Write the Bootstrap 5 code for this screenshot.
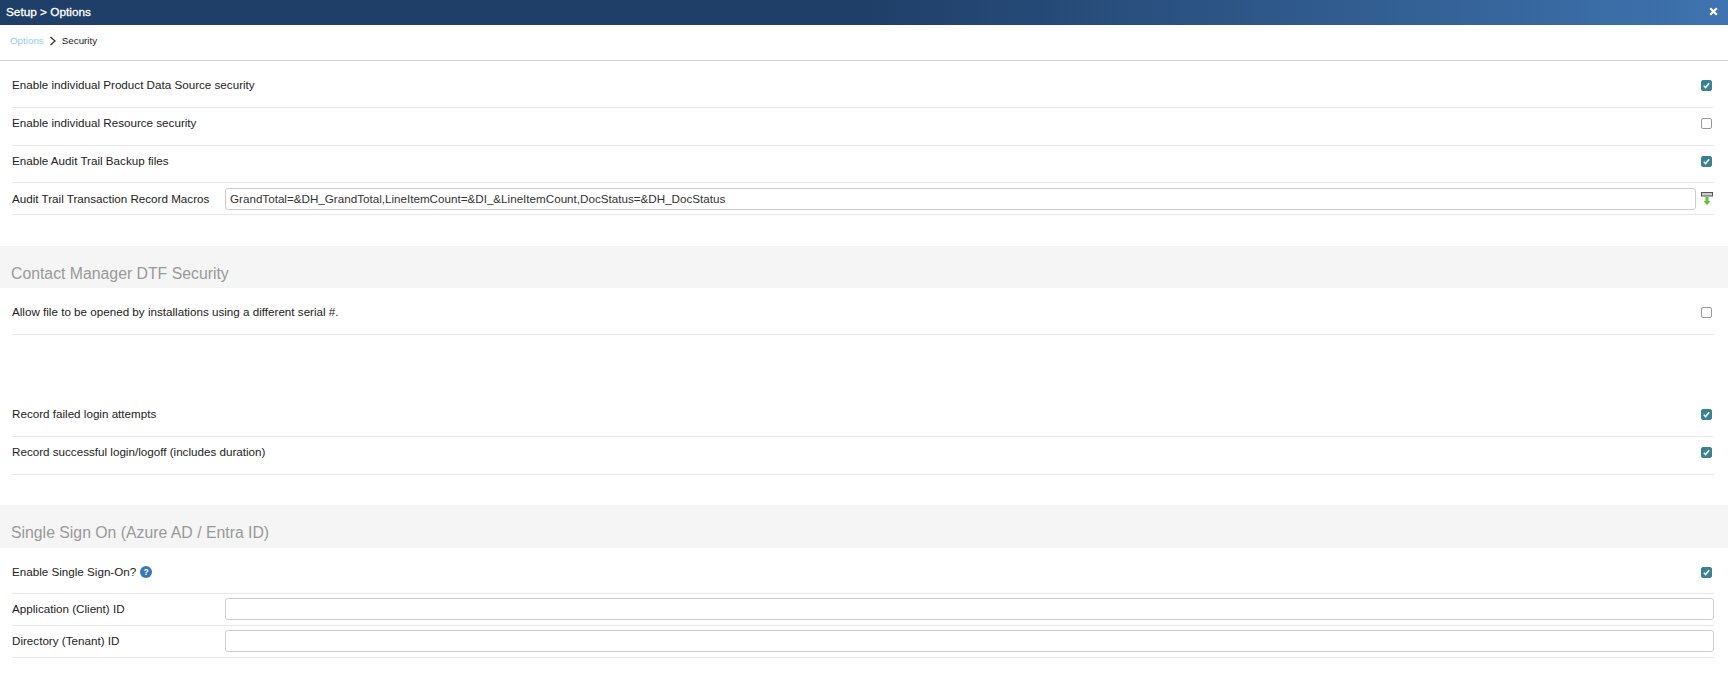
<!DOCTYPE html>
<html lang="en">
<head>
<meta charset="utf-8">
<title>Setup &gt; Options</title>
<link href="https://cdn.jsdelivr.net/npm/bootstrap@5.3.0/dist/css/bootstrap.min.css" rel="stylesheet">
<style>
html,body{height:686px;overflow:hidden;background:#fff}
body{font-family:"Liberation Sans",Arial,sans-serif;font-size:11.65px;color:#222;line-height:14px}
.title-bar{height:25px;padding:0 6px 2px;color:#fff;font-size:11.8px;font-weight:400;-webkit-text-stroke:.3px #fff;background:linear-gradient(90deg,#1f3f68 0,#1f3f68 50%,#3f74b0 100%)}
.crumb-bar{height:36px;padding:0 10px 3px;border-bottom:1px solid #d2d2d2;font-size:9.8px;gap:5px}
.crumb-link{color:#93cdee}
.opt-row{margin:0 14px 0 12px;border-bottom:1px solid #e8e8e8;padding-right:2px}
.row-lg{padding-top:17px}
.row-sm{padding-top:8px}
.row-field{padding-bottom:1px}
.h-47{height:47px}.h-46{height:46px}.h-38{height:38px}.h-37{height:37px}.h-32{height:32px}
.opt-check{appearance:none;width:11px;height:11px;margin:2px 0 0;border:1px solid #999;border-radius:2px;background:#fff;display:block;flex:none}
.opt-check:checked{border-color:#3b8291;background-color:#3b8291;background-image:url("data:image/svg+xml,%3Csvg xmlns='http://www.w3.org/2000/svg' viewBox='0 0 11 11'%3E%3Cpath d='M2.2 5.8 4.4 8 8.8 2.8' fill='none' stroke='white' stroke-width='1.8'/%3E%3C/svg%3E")}
.opt-label{width:213px;flex:none}
.opt-input{height:22px;border:1px solid #ccc;border-radius:3px;padding:0 4px;font:11.65px "Liberation Sans",Arial,sans-serif;color:#333;min-width:0;flex:1 1 auto;outline:none}
.section-head{height:42px;background:#f5f5f5;padding:0 11px 5px;color:#999;font-size:15.8px;line-height:19px;font-weight:400}
.sec-a{margin-top:31px}
.sec-b{margin-top:30px;height:43px;padding-bottom:6px}
.gap-a{height:64px}
.icon-btn{flex:none;margin:0 -1px 0 5px}
.help-dot{width:12px;height:12px;margin-left:4px}
.opt-input-full{margin-right:-2px}
</style>
</head>
<body>
<div class="title-bar d-flex align-items-center justify-content-between">
  <span>Setup &gt; Options</span>
  <svg width="9" height="9" viewBox="0 0 9 9" class="me-1"><path d="M1.2 1.2 7.8 7.800M7.8 1.2 1.2 7.8" stroke="#fff" stroke-width="2.2" fill="none"/></svg>
</div>
<div class="crumb-bar d-flex align-items-center">
  <span class="crumb-link">Options</span>
  <svg width="8" height="10" viewBox="0 0 8 10"><path d="M1.5 1 6 5 1.5 9" stroke="#333" stroke-width="1.3" fill="none"/></svg>
  <span>Security</span>
</div>
<div class="opt-row row-lg h-47 d-flex align-items-start justify-content-between"><span>Enable individual Product Data Source security</span><input class="opt-check" type="checkbox" checked aria-label="Enable individual Product Data Source security"></div>
<div class="opt-row row-sm h-38 d-flex align-items-start justify-content-between"><span>Enable individual Resource security</span><input class="opt-check" type="checkbox" aria-label="Enable individual Resource security"></div>
<div class="opt-row row-sm h-37 d-flex align-items-start justify-content-between"><span>Enable Audit Trail Backup files</span><input class="opt-check" type="checkbox" checked aria-label="Enable Audit Trail Backup files"></div>
<div class="opt-row h-32 d-flex align-items-center">
  <span class="opt-label">Audit Trail Transaction Record Macros</span>
  <input class="opt-input" type="text" value="GrandTotal=&amp;DH_GrandTotal,LineItemCount=&amp;DI_&amp;LineItemCount,DocStatus=&amp;DH_DocStatus" aria-label="Audit Trail Transaction Record Macros">
  <svg class="icon-btn" width="12" height="13" viewBox="0 0 12 13"><rect x="0.5" y="0.5" width="11" height="3.5" fill="#ccc" stroke="#555"/><path d="M4.5 5h3v4h2L6 13 2.500 9h2z" fill="#55c832"/></svg>
</div>
<div class="section-head sec-a d-flex align-items-end">Contact Manager DTF Security</div>
<div class="opt-row row-lg h-47 d-flex align-items-start justify-content-between"><span>Allow file to be opened by installations using a different serial #.</span><input class="opt-check" type="checkbox" aria-label="Allow file to be opened"></div>
<div class="gap-a"></div>
<div class="opt-row row-sm h-38 d-flex align-items-start justify-content-between"><span>Record failed login attempts</span><input class="opt-check" type="checkbox" checked aria-label="Record failed login attempts"></div>
<div class="opt-row row-sm h-38 d-flex align-items-start justify-content-between"><span>Record successful login/logoff (includes duration)</span><input class="opt-check" type="checkbox" checked aria-label="Record successful login/logoff"></div>
<div class="section-head sec-b d-flex align-items-end">Single Sign On (Azure AD / Entra ID)</div>
<div class="opt-row row-lg h-46 d-flex align-items-start justify-content-between">
  <span class="d-flex align-items-center">Enable Single Sign-On?
    <svg class="help-dot" viewBox="0 0 12 12"><circle cx="6" cy="6" r="6" fill="#3b76b5"/><text x="6" y="9" text-anchor="middle" font-family="Liberation Sans" font-weight="700" font-size="8.5" fill="#fff">?</text></svg>
  </span>
  <input class="opt-check" type="checkbox" checked aria-label="Enable Single Sign-On">
</div>
<div class="opt-row row-field h-32 d-flex align-items-center"><span class="opt-label">Application (Client) ID</span><input class="opt-input opt-input-full" type="text" aria-label="Application (Client) ID"></div>
<div class="opt-row row-field h-32 d-flex align-items-center"><span class="opt-label">Directory (Tenant) ID</span><input class="opt-input opt-input-full" type="text" aria-label="Directory (Tenant) ID"></div>
<script src="https://cdn.jsdelivr.net/npm/bootstrap@5.3.0/dist/js/bootstrap.bundle.min.js"></script>
</body>
</html>
